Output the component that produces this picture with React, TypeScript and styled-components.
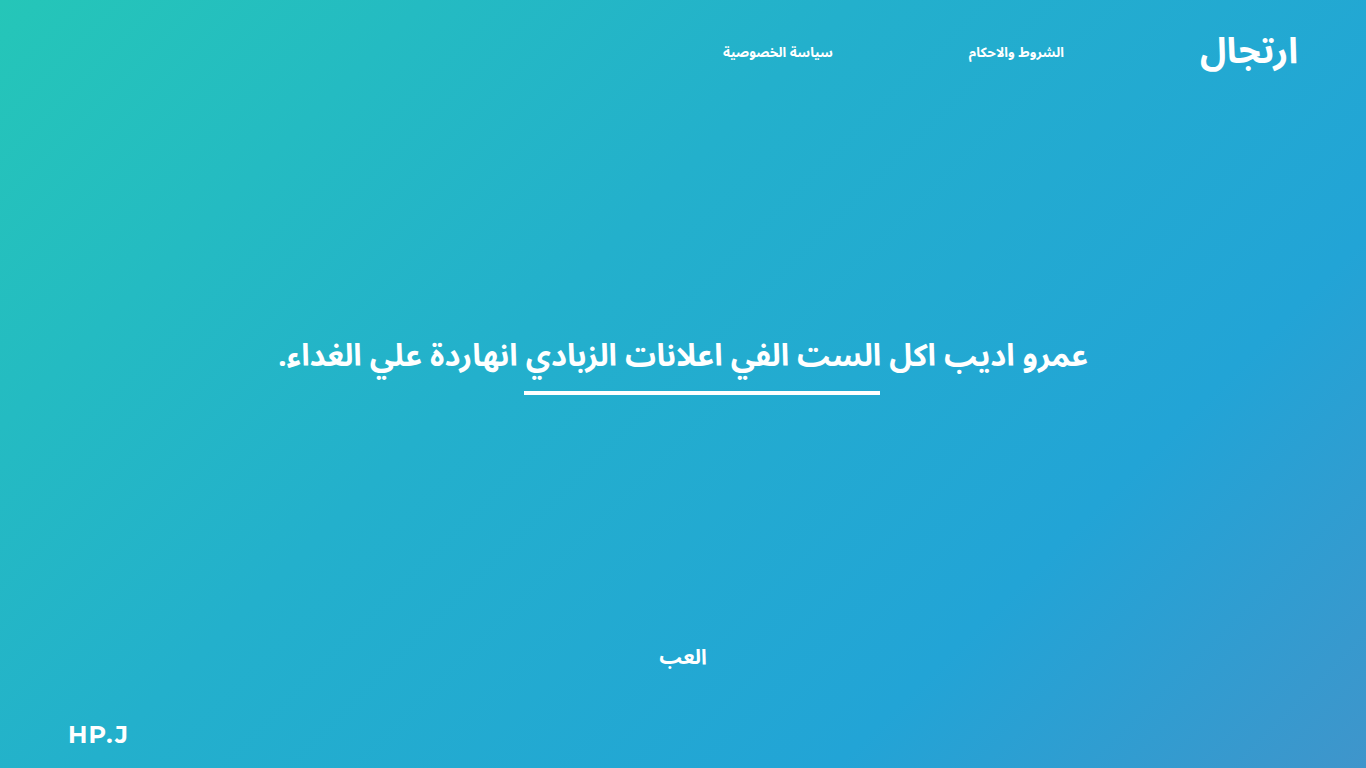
import styled, { createGlobalStyle } from "styled-components";

const GlobalStyle = createGlobalStyle`
  html, body {
    margin: 0;
    padding: 0;
    height: 100%;
  }
  body {
    font-family: "Noto Sans Arabic", "Noto Sans", "DejaVu Sans", sans-serif;
    color: #fff;
  }
  * {
    box-sizing: border-box;
  }
`;

const Page = styled.div`
  direction: rtl;
  width: 100%;
  height: 100vh;
  display: flex;
  flex-direction: column;
  background: linear-gradient(135deg, #25c6b8 0%, #23b0cc 40%, #22a4d6 75%, #3f95cb 100%);
  overflow: hidden;
`;

const Header = styled.header`
  display: flex;
  align-items: center;
  gap: 136px;
  height: 104px;
  padding: 0 68px;
`;

const Logo = styled.a`
  font-size: 36px;
  font-weight: 700;
  color: #fff;
  text-decoration: none;
  line-height: 1;
`;

const NavLink = styled.a`
  font-size: 13.5px;
  font-weight: 700;
  color: #fff;
  text-decoration: none;
`;

const Hero = styled.main`
  flex: 1;
  display: flex;
  flex-direction: column;
  align-items: center;
  justify-content: center;
  padding-bottom: 9px;
`;

const Title = styled.h1`
  margin: 0;
  font-size: 30.8px;
  line-height: 1.4;
  font-weight: 700;
  text-align: center;
`;

const Underline = styled.span`
  display: block;
  width: 356px;
  height: 4px;
  margin-top: 12px;
  margin-right: -38px;
  background: #fff;
`;

const PlayButton = styled.button`
  align-self: center;
  border: none;
  background: none;
  color: #fff;
  font-family: inherit;
  font-size: 21px;
  font-weight: 700;
  cursor: pointer;
  padding: 0;
  margin-bottom: 41px;
`;

const Footer = styled.footer`
  direction: ltr;
  padding: 0 68px 13px;
`;

const Brand = styled.span`
  font-family: "Montserrat", "Open Sans", "Inter", sans-serif;
  font-size: 24px;
  font-weight: 700;
  letter-spacing: 1px;
`;

export default function App() {
  return (
    <>
      <GlobalStyle />
      <Page>
        <Header>
          <Logo href="#">ارتجال</Logo>
          <NavLink href="#">الشروط والاحكام</NavLink>
          <NavLink href="#">سياسة الخصوصية</NavLink>
        </Header>
        <Hero>
          <Title>عمرو اديب اكل الست الفي اعلانات الزبادي انهاردة علي الغداء.</Title>
          <Underline />
        </Hero>
        <PlayButton>العب</PlayButton>
        <Footer>
          <Brand>HP.J</Brand>
        </Footer>
      </Page>
    </>
  );
}
